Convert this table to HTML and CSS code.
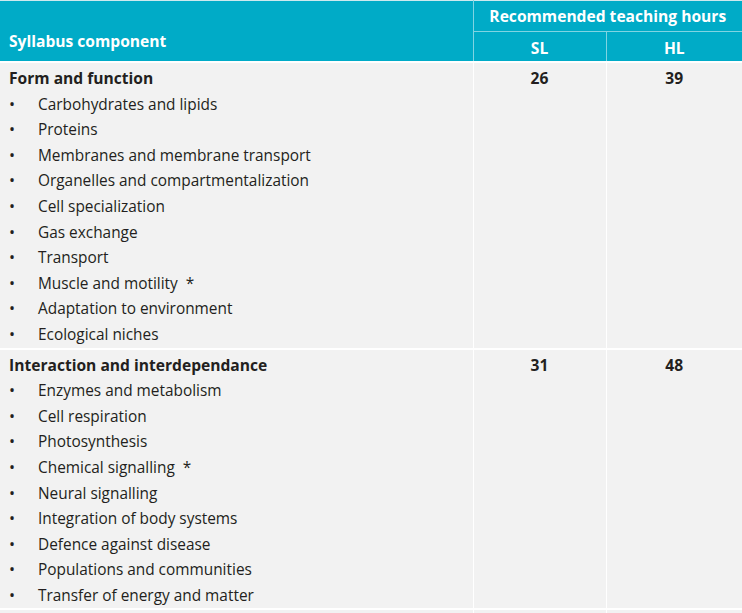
FILE: index.html
```html
<!DOCTYPE html>
<html>
<head>
<meta charset="utf-8">
<link rel="stylesheet" href="styles.css">
</head>
<body>
<table class="syl">
  <colgroup>
    <col class="c-main">
    <col class="c-sl">
    <col class="c-hl">
  </colgroup>
  <thead>
    <tr class="h1">
      <th class="h-comp" rowspan="2">Syllabus component</th>
      <th class="h-rec" colspan="2">Recommended teaching hours</th>
    </tr>
    <tr class="h2">
      <th class="h-lvl">SL</th>
      <th class="h-lvl h-last">HL</th>
    </tr>
  </thead>
  <tbody>
    <tr>
      <td class="comp">
        <div class="topic">Form and function</div>
        <ul class="items">
          <li>Carbohydrates and lipids</li>
          <li>Proteins</li>
          <li>Membranes and membrane transport</li>
          <li>Organelles and compartmentalization</li>
          <li>Cell specialization</li>
          <li>Gas exchange</li>
          <li>Transport</li>
          <li>Muscle and motility&nbsp;&nbsp;*</li>
          <li>Adaptation to environment</li>
          <li>Ecological niches</li>
        </ul>
      </td>
      <td class="num">26</td>
      <td class="num">39</td>
    </tr>
    <tr>
      <td class="comp">
        <div class="topic">Interaction and interdependance</div>
        <ul class="items">
          <li>Enzymes and metabolism</li>
          <li>Cell respiration</li>
          <li>Photosynthesis</li>
          <li>Chemical signalling&nbsp;&nbsp;*</li>
          <li>Neural signalling</li>
          <li>Integration of body systems</li>
          <li>Defence against disease</li>
          <li>Populations and communities</li>
          <li>Transfer of energy and matter</li>
        </ul>
      </td>
      <td class="num">31</td>
      <td class="num">48</td>
    </tr>
    <tr class="next">
      <td class="comp"></td>
      <td class="num"></td>
      <td class="num"></td>
    </tr>
  </tbody>
</table>
</body>
</html>
```

FILE: styles.css
```css
html, body {
  margin: 0;
  padding: 0;
  background: #ffffff;
}

body {
  font-family: "Open Sans", "Noto Sans", sans-serif;
  color: #231f20;
  overflow: hidden;
  height: 613px;
}

.syl {
  width: 742px;
  border-collapse: collapse;
  table-layout: fixed;
  border-top: 1px solid #cde9ee;
}

.c-main { width: 473px; }
.c-sl { width: 133px; }
.c-hl { width: 136px; }

th {
  background: #00abc7;
  color: #ffffff;
  font-weight: 700;
  font-size: 15.6px;
  padding: 0;
}

.h-comp {
  text-align: left;
  vertical-align: bottom;
  padding: 0 0 9px 9px;
  border-right: 1px solid #80d4e2;
}

.h-rec {
  height: 30px;
  text-align: center;
  border-bottom: 1px solid #80d4e2;
}

.h-lvl {
  height: 26px;
  padding-top: 3px;
  text-align: center;
  border-right: 1px solid #80d4e2;
}

.h-last {
  border-right: none;
}

thead tr.h2 th,
.h-comp {
  border-bottom: 2px solid #ffffff;
}

td {
  background: #f2f2f2;
  padding: 3px 0 0 0;
  vertical-align: top;
  border-bottom: 2px solid #ffffff;
  border-right: 1px solid #ffffff;
  font-size: 15.4px;
  line-height: 25.6px;
}

td:last-child {
  border-right: none;
}

.comp {
  padding-left: 9px;
}

.topic {
  font-weight: 700;
  font-size: 15.6px;
}

.items {
  list-style: none;
  margin: 0;
  padding: 0;
}

.items li {
  position: relative;
  padding-left: 29px;
}

.items li::before {
  content: "•";
  position: absolute;
  left: 0;
  top: 0;
  font-size: 16px;
}

.num {
  text-align: center;
  font-weight: 700;
  font-size: 15.6px;
}

.next td {
  height: 40px;
}
```
